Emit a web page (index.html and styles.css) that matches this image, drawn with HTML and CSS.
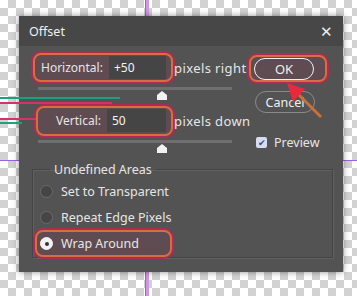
FILE: index.html
```html
<!DOCTYPE html>
<html lang="en">
<head>
  <meta charset="UTF-8" />
  <title>Offset</title>
  <link rel="stylesheet" href="styles.css">
</head>
<body>
  <div class="guide guide-v"></div>
  <div class="guide guide-h"></div>

  <div class="dialog">
    <div class="titlebar">
      <span class="title">Offset</span>
      <span class="close">&#x2715;</span>
    </div>

    <div class="content">
      <div class="fields">
        <div class="row">
          <span class="mark mark-h">
            <label class="label">Horizontal:</label>
            <span class="input">+50</span>
          </span>
          <span class="unit">pixels right</span>
        </div>
        <div class="slider"><span class="thumb"></span></div>

        <div class="row row-v">
          <span class="mark mark-v">
            <label class="label">Vertical:</label>
            <span class="input">50</span>
          </span>
          <span class="unit">pixels down</span>
        </div>
        <div class="slider"><span class="thumb"></span></div>
      </div>

      <div class="buttons">
        <span class="mark mark-ok"><button class="btn btn-ok">OK</button></span>
        <button class="btn btn-cancel">Cancel</button>
        <label class="check"><span class="box">&#x2714;</span>Preview</label>
        <svg class="arrow" width="40" height="36" viewBox="0 0 40 36">
          <path d="M36 34 L12 10" stroke="#c8703c" stroke-width="3" fill="none" />
          <path d="M2 0 L20 6 L8 19 Z" fill="#e8283c" />
        </svg>
      </div>
    </div>

    <fieldset class="group">
      <legend>Undefined Areas</legend>
      <label class="radio"><span class="dot"></span>Set to Transparent</label>
      <label class="radio"><span class="dot"></span>Repeat Edge Pixels</label>
      <span class="mark mark-wrap">
        <label class="radio"><span class="dot on"></span>Wrap Around</label>
      </span>
    </fieldset>
  </div>

  <!-- stray annotation strokes -->
  <div class="stroke s1"></div>
  <div class="stroke s2"></div>
  <div class="stroke s3"></div>
  <div class="stroke s4"></div>
</body>
</html>
```

FILE: styles.css
```css
body {
  margin: 0;
  padding: 16px 0 0 19px;
  height: 296px;
  box-sizing: border-box;
  font-family: "Noto Sans", sans-serif;
  font-size: 12px;
  color: #e6e6e6;
  background: repeating-conic-gradient(#d2d2d2 0 25%, #ffffff 0 50%) 0 0 / 16px 16px;
  position: relative;
  overflow: hidden;
}

/* Guides behind the dialog */
.guide {
  position: absolute;
  background: #9d5ee6;
}

.guide-v {
  left: 145px;
  top: 0;
  width: 1px;
  height: 296px;
  border-right: 3px solid rgba(240, 190, 225, 0.6);
}

.guide-h {
  left: 0;
  top: 160px;
  width: 357px;
  height: 1px;
}

/* Stray annotation strokes */
.stroke {
  position: absolute;
  height: 2px;
}

.s1 { left: 0; top: 97px; width: 120px; background: #1fa07a; }
.s2 { left: 0; top: 102px; width: 112px; background: #d8306a; }
.s3 { left: 0; top: 118px; width: 36px; background: #d8306a; }
.s4 { left: 0; top: 122px; width: 22px; background: #1fa07a; }

/* Dialog */
.dialog {
  position: relative;
  width: 324px;
  height: 256px;
  background: #535353;
  box-shadow: 0 0 6px rgba(0, 0, 0, 0.45);
}

.titlebar {
  height: 30px;
  background: #474747;
  display: flex;
  align-items: center;
  justify-content: space-between;
  padding: 0 10px 0 10px;
}

.title {
  font-size: 12.5px;
  color: #f0f0f0;
}

.close {
  font-size: 15px;
  color: #ededed;
}

.content {
  display: flex;
  padding: 7px 0 0 14px;
}

.fields {
  width: 218px;
}

.row {
  display: flex;
  align-items: center;
  height: 29px;
}

.row-v {
  margin-top: 16px;
  padding-left: 3px;
}

.mark {
  display: inline-flex;
  align-items: center;
  box-sizing: border-box;
  border: 2px solid #d4703e;
  border-radius: 8px;
  box-shadow: 0 0 0 2px #b02a55;
  background: rgba(150, 40, 80, 0.18);
}

.mark-h {
  width: 140px;
  height: 29px;
  padding: 0 5px 0 6px;
}

.mark-v {
  width: 137px;
  height: 30px;
  padding: 0 5px 0 3px;
}

.label {
  flex: 1;
  text-align: right;
  padding-right: 6px;
}

.input {
  width: 54px;
  height: 23px;
  line-height: 23px;
  padding-left: 5px;
  background: #454545;
  color: #f4f4f4;
}

.unit {
  margin-left: 1px;
  font-size: 13px;
  letter-spacing: 0.4px;
}

.slider {
  position: relative;
  margin: 5px 0 0 5px;
  width: 194px;
  height: 3px;
  background: #6f6f6f;
}

.thumb {
  position: absolute;
  left: 119px;
  top: 4px;
  width: 10px;
  height: 9px;
  background: #f2f2f2;
  clip-path: polygon(50% 0, 100% 45%, 100% 100%, 0 100%, 0 45%);
}

/* Buttons */
.buttons {
  position: relative;
  display: flex;
  flex-direction: column;
  align-items: flex-start;
  margin-left: -2px;
}

.mark-ok {
  width: 78px;
  height: 27px;
  margin-top: 2px;
  padding-left: 3px;
}

.btn {
  font-family: "Noto Sans", sans-serif;
  font-size: 12px;
  height: 22px;
  width: 60px;
  border-radius: 11px;
  background: transparent;
  color: #f0f0f0;
  padding: 0;
}

.btn-ok {
  border: 1.5px solid #f2f2f2;
  font-size: 13px;
}

.btn-cancel {
  margin: 9px 0 0 6px;
  border: 1.5px solid #8a8a8a;
  font-size: 12.5px;
}

.check {
  display: flex;
  align-items: center;
  margin: 21px 0 0 7px;
  font-size: 12.5px;
}

.box {
  width: 11px;
  height: 11px;
  margin-right: 7px;
  background: #d8dcf0;
  border-radius: 2px;
  color: #3d4a82;
  font-size: 9px;
  line-height: 11px;
  text-align: center;
}

.arrow {
  position: absolute;
  left: 36px;
  top: 30px;
}

/* Group box */
.group {
  margin: 10px 0 0 13px;
  width: 301px;
  height: 97px;
  box-sizing: border-box;
  border: 1px solid #444444;
  box-shadow: 1px 1px 0 #606060, inset 1px 1px 0 #606060;
  padding: 0 0 0 7px;
}

.group legend {
  padding: 0 4px;
  margin-left: 10px;
  font-size: 12.5px;
}

.radio {
  display: flex;
  align-items: center;
  height: 26px;
  font-size: 12.5px;
}

.dot {
  width: 11px;
  height: 11px;
  border-radius: 50%;
  background: #454545;
  border: 1px solid #6a6a6a;
  margin-right: 8px;
}

.dot.on {
  background: #f2f2f2;
  border-color: #f2f2f2;
  position: relative;
}

.dot.on::after {
  content: "";
  position: absolute;
  left: 3.5px;
  top: 3.5px;
  width: 4px;
  height: 4px;
  border-radius: 50%;
  background: #333;
}

.mark-wrap {
  width: 137px;
  height: 27px;
  margin-left: -5px;
  padding-left: 3px;
}
```
